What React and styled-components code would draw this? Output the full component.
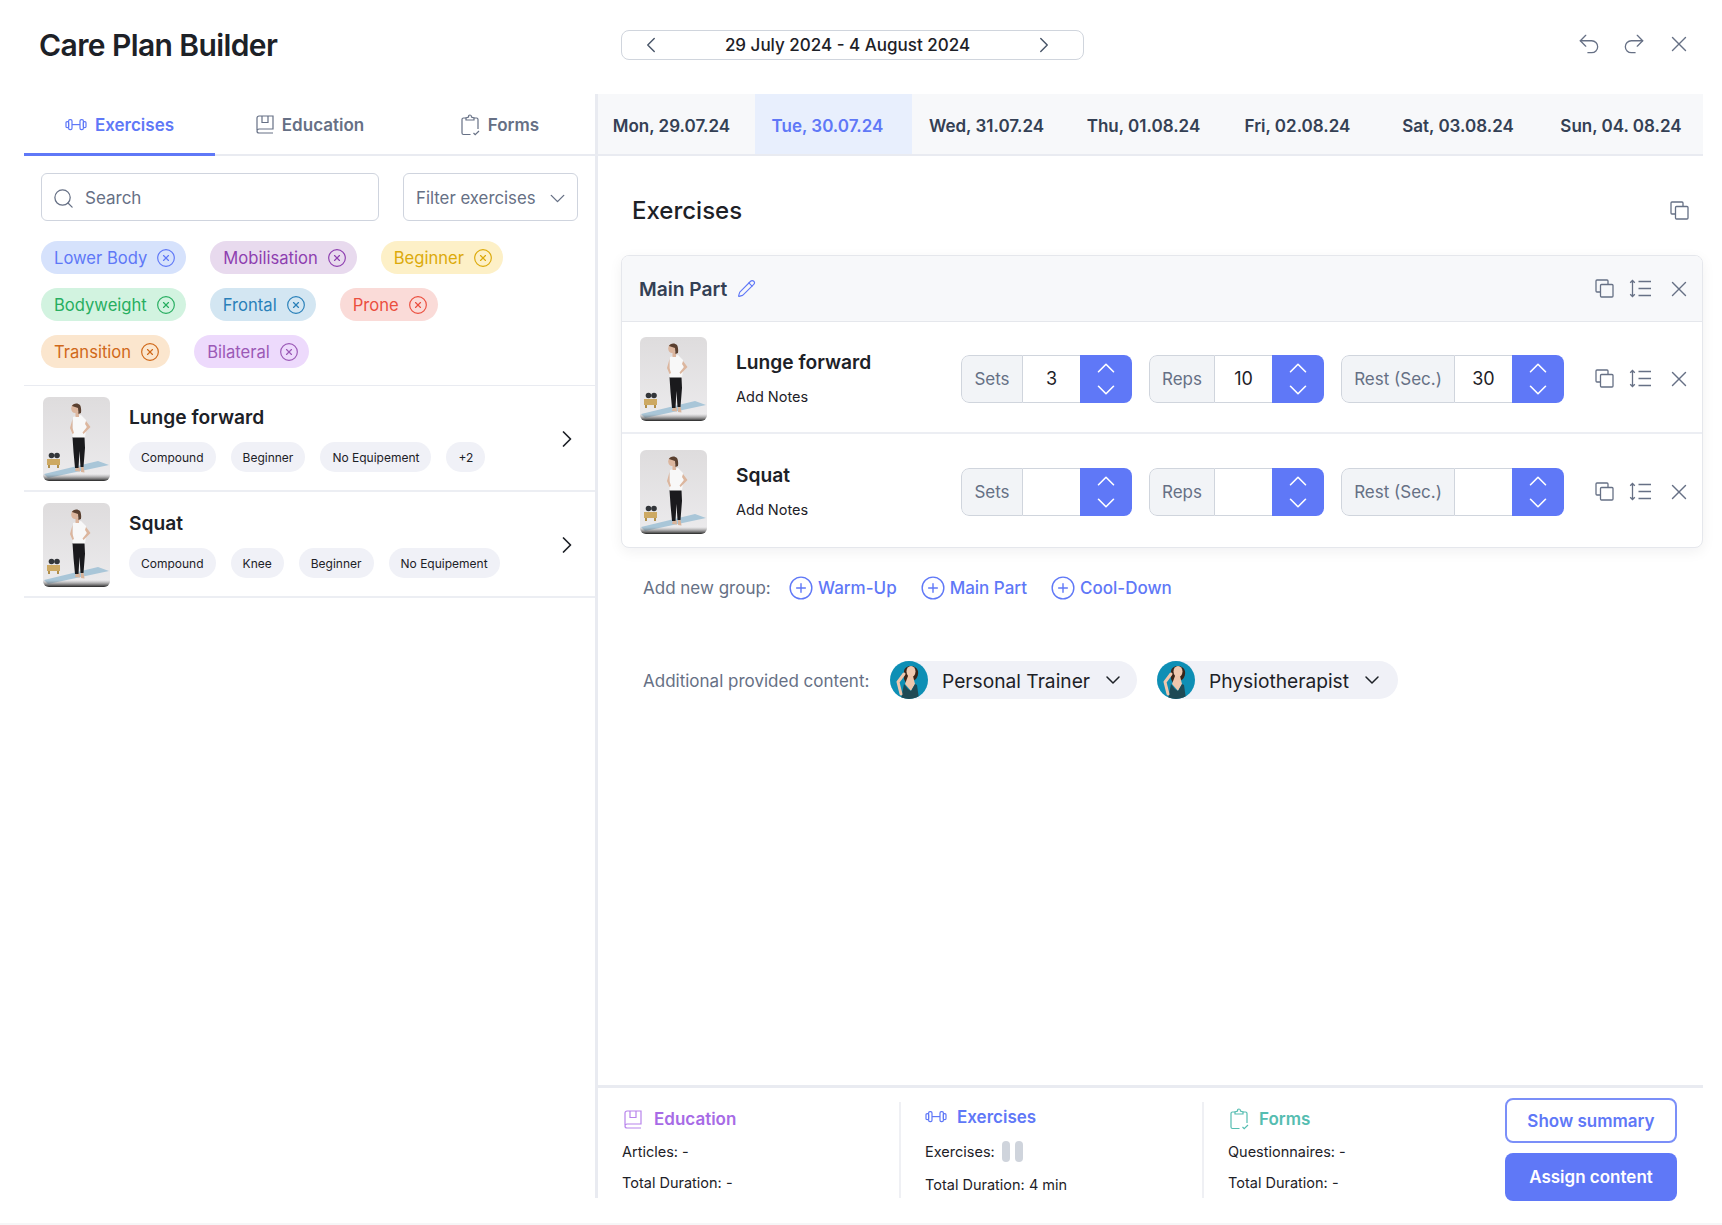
import React from 'react';
import styled, { createGlobalStyle } from 'styled-components';
import {
  ChevronLeft, ChevronRight, ChevronDown, ChevronUp, Undo2, Redo2, X, Search,
  CircleX, CirclePlus, Pencil,
} from 'lucide-react';

const BLUE = '#5f78f7';

const Global = createGlobalStyle`
  html, body { margin: 0; padding: 0; background: #fff; }
  * { box-sizing: border-box; }
  body { font-family: Inter, "Liberation Sans", sans-serif; color: #1d2127; }
`;

const Page = styled.div`
  width: 1722px;
  height: 1225px;
  padding: 0 19px 25px 24px;
  display: flex;
  flex-direction: column;
  overflow: hidden;
  background: #fff;
  border-bottom: 2px solid #f6f6f7;
`;

const Header = styled.header`
  height: 94px;
  flex: none;
  display: flex;
  align-items: flex-start;
`;

const Title = styled.h1`
  margin: 28px 0 0 15px;
  width: 582px;
  font-size: 30px;
  line-height: 34px;
  font-weight: 600;
  letter-spacing: -0.6px;
`;

const DateBox = styled.div`
  margin-top: 30px;
  width: 463px;
  height: 30px;
  border: 1px solid #d0d5dd;
  border-radius: 8px;
  display: flex;
  align-items: center;
  justify-content: space-between;
  padding: 0 26px 0 16px;
  font-size: 17px;
  font-weight: 500;
  color: #1d2127;
`;

const HeaderActions = styled.div`
  margin: 31px 0 0 auto;
  display: flex;
  align-items: center;
  gap: 19px;
  padding-right: 11px;
  color: #667085;
`;

const Body = styled.div`
  flex: 1;
  min-height: 0;
  display: flex;
`;

const Left = styled.aside`
  width: 574px;
  flex: none;
  border-right: 3px solid #e9ebf1;
  display: flex;
  flex-direction: column;
`;

const Tabs = styled.nav`
  height: 62px;
  flex: none;
  display: grid;
  grid-template-columns: 191px 190px 190px;
  border-bottom: 2px solid #e9ebf1;
`;

const Tab = styled.div`
  display: flex;
  align-items: center;
  justify-content: center;
  gap: 8px;
  padding-top: 2px;
  font-size: 17px;
  font-weight: 600;
  color: ${p => (p.$active ? BLUE : '#667085')};
  margin-bottom: -2px;
  border-bottom: 3px solid ${p => (p.$active ? BLUE : 'transparent')};
`;

const FilterRow = styled.div`
  display: flex;
  gap: 24px;
  padding: 17px 0 0 17px;
`;

const SearchBox = styled.div`
  width: 338px;
  height: 48px;
  border: 1px solid #cfd4de;
  border-radius: 6px;
  display: flex;
  align-items: center;
  gap: 10px;
  padding: 2px 0 0 10px;
  font-size: 17px;
  color: #667085;
`;

const FilterBox = styled.div`
  width: 175px;
  height: 48px;
  border: 1px solid #cfd4de;
  border-radius: 6px;
  display: flex;
  align-items: center;
  justify-content: space-between;
  padding: 2px 7px 0 12px;
  font-size: 16.800px;
  color: #667085;
`;

const Chips = styled.div`
  display: flex;
  flex-direction: column;
  gap: 14px;
  padding: 20px 0 17px 17px;
  border-bottom: 1px solid #e9ebf1;
`;

const ChipRow = styled.div`
  display: flex;
  gap: 24px;
`;

const Chip = styled.span`
  height: 33px;
  border-radius: 17px;
  padding: 1px 10px 0 13px;
  display: inline-flex;
  align-items: center;
  gap: 9px;
  font-size: 16.600px;
  background: ${p => p.$bg};
  color: ${p => p.$fg};
`;

const ListItem = styled.div`
  height: 106px;
  padding: 11px 14px 0 19px;
  display: flex;
  align-items: flex-start;
  border-bottom: 2px solid #eceef3;
`;

const Thumb = styled.svg`
  width: 67px;
  height: 84px;
  flex: none;
  border-radius: 6px;
  display: block;
`;

const ItemInfo = styled.div`
  margin-left: 19px;
  flex: 1;
  display: flex;
  flex-direction: column;
`;

const ItemName = styled.div`
  font-size: 19.200px;
  line-height: 24px;
  font-weight: 600;
  margin-top: 8px;
`;

const TagRow = styled.div`
  display: flex;
  gap: 15px;
  margin-top: 13px;
`;

const Tag = styled.span`
  height: 30px;
  padding: 0 12px;
  border-radius: 15px;
  background: #f0f1f7;
  display: inline-flex;
  align-items: center;
  font-size: 12px;
  color: #1d2127;
`;

const ItemArrow = styled.div`
  align-self: center;
  margin-top: -9px;
  color: #1d2127;
  display: flex;
`;

const Right = styled.main`
  flex: 1;
  min-width: 0;
  display: flex;
  flex-direction: column;
`;

const Days = styled.div`
  height: 62px;
  flex: none;
  display: flex;
  background: #f7f8fa;
  border-bottom: 2px solid #e9ebf1;
`;

const Day = styled.div`
  width: ${p => p.$w}px;
  padding: 4px ${p => p.$pr || 0}px 0 0;
  display: flex;
  align-items: center;
  justify-content: center;
  font-size: 17px;
  font-weight: 600;
  white-space: nowrap;
  color: ${p => (p.$active ? BLUE : '#344054')};
  background: ${p => (p.$active ? '#e8effd' : 'transparent')};
`;

const Content = styled.div`
  flex: 1;
  min-height: 0;
  padding: 0 0 0 23px;
`;

const SectionHead = styled.div`
  display: flex;
  justify-content: space-between;
  align-items: center;
  height: 99px;
  padding: 10px 14px 0 11px;
`;

const SectionTitle = styled.h2`
  margin: 0;
  font-size: 24px;
  font-weight: 500;
  color: #1d2127;
`;

const SectionAction = styled.span`
  display: flex;
  color: #667085;
`;

const GroupCard = styled.section`
  border: 1px solid #e5e7ec;
  border-radius: 8px;
  overflow: hidden;
  box-shadow: 0 4px 14px rgba(16, 24, 40, 0.06);
  background: #fff;
`;

const GroupHead = styled.div`
  height: 66px;
  background: #f7f8fa;
  border-bottom: 1px solid #e5e7ec;
  display: flex;
  align-items: center;
  padding: 0 10px 0 17px;
`;

const GroupTitle = styled.div`
  font-size: 19.200px;
  font-weight: 600;
  color: #344054;
  margin-right: 10px;
`;

const RowActions = styled.div`
  margin-left: auto;
  display: flex;
  align-items: center;
  gap: 15px;
  color: #667085;
`;

const ExerciseRow = styled.div`
  height: ${p => p.$h}px;
  display: flex;
  align-items: center;
  padding: ${p => p.$pt}px 10px 0 18px;
  border-bottom: ${p => (p.$last ? 'none' : '2px solid #eceef3')};
`;

const RowInfo = styled.div`
  width: 225px;
  margin-left: 29px;
  flex: none;
  margin-top: -1px;
`;

const RowName = styled.div`
  font-size: 19.200px;
  font-weight: 600;
  line-height: 24px;
  margin-bottom: 14px;
`;

const Notes = styled.div`
  font-size: 14.500px;
  line-height: 18px;
  color: #1d2127;
`;

const Steppers = styled.div`
  display: flex;
  gap: 17px;
  flex: none;
`;

const Stepper = styled.div`
  height: 48px;
  display: flex;
  border-radius: 8px;
  overflow: hidden;
`;

const StepLabel = styled.div`
  width: ${p => p.$w}px;
  background: #f2f4f7;
  border: 1px solid #d0d5dd;
  border-radius: 8px 0 0 8px;
  display: flex;
  align-items: center;
  justify-content: center;
  font-size: 17px;
  color: #667085;
`;

const StepValue = styled.div`
  width: 57px;
  border-top: 1px solid #d0d5dd;
  border-bottom: 1px solid #d0d5dd;
  display: flex;
  align-items: center;
  justify-content: center;
  font-size: 18px;
  color: #1d2127;
`;

const StepButtons = styled.div`
  width: 52px;
  background: ${BLUE};
  color: #fff;
  display: flex;
  flex-direction: column;
  align-items: center;
  justify-content: center;
  & > svg + svg { margin-top: -8px; }
  & > svg { flex: none; margin-bottom: 0; }
`;

const AddRow = styled.div`
  display: flex;
  align-items: center;
  height: 26px;
  margin-top: 27px;
  padding-left: 22px;
  font-size: 17px;
  color: #667085;
`;

const AddLabel = styled.span`
  width: 145px;
`;

const AddLink = styled.span`
  display: inline-flex;
  align-items: center;
  gap: 4px;
  margin-right: 23px;
  color: ${BLUE};
  font-weight: 500;
`;

const ProvidedRow = styled.div`
  display: flex;
  align-items: center;
  margin-top: 60px;
  padding-left: 22px;
  font-size: 17px;
  color: #667085;
`;

const ProvidedLabel = styled.span`
  width: 247px;
  padding-top: 2px;
`;

const Pill = styled.div`
  height: 38px;
  width: ${p => p.$w}px;
  margin-right: 20px;
  border-radius: 19px;
  background: #f0f1f7;
  display: flex;
  align-items: center;
  font-size: 19.200px;
  color: #1d2127;
`;

const PillName = styled.span`
  margin: 2px 11px 0 14px;
`;

const Avatar = styled.svg`
  width: 38px;
  height: 38px;
  border-radius: 50%;
  flex: none;
`;

const Footer = styled.footer`
  height: 113px;
  flex: none;
  border-top: 3px solid #e9ebf1;
  display: flex;
  align-items: flex-start;
`;

const Stat = styled.div`
  width: ${p => p.$w}px;
  height: 96px;
  margin-top: 14px;
  padding: 6px 0 0 ${p => p.$pl}px;
  border-right: ${p => (p.$last ? 'none' : '2px solid #eff0f4')};
  display: flex;
  flex-direction: column;
`;

const StatHead = styled.div`
  display: flex;
  align-items: center;
  gap: ${p => p.$gap}px;
  height: 22px;
  margin-top: ${p => p.$mt || 0}px;
  margin-left: ${p => p.$ml || 0}px;
  font-size: 17px;
  font-weight: 600;
  color: ${p => p.$color};
`;

const StatLine = styled.div`
  font-size: 14.500px;
  line-height: 20px;
  margin-top: ${p => p.$mt}px;
  color: #1d2127;
  display: flex;
  align-items: center;
`;

const Skeleton = styled.span`
  width: 8px;
  height: 21px;
  border-radius: 4px;
  background: #cfd4dc;
  margin-left: ${p => p.$ml}px;
`;

const FooterActions = styled.div`
  width: 172px;
  margin: 10px 26px 0 auto;
  display: flex;
  flex-direction: column;
  gap: 10px;
`;

const GhostButton = styled.button`
  height: 45px;
  border-radius: 8px;
  border: 2px solid #7b8ff8;
  background: #fff;
  color: ${BLUE};
  font: 600 17px Inter, sans-serif;
`;

const PrimaryButton = styled.button`
  height: 48px;
  border-radius: 8px;
  border: none;
  background: ${BLUE};
  color: #fff;
  font: 600 17px Inter, sans-serif;
`;

const Dumbbell = ({ size = 22, color = 'currentColor' }) => (
  <svg width={size} height={size * 0.6} viewBox="0 0 22 13" fill="none" stroke={color} strokeWidth="1.2">
    <rect x="1" y="3.5" width="2.6" height="6" rx="1.1" />
    <rect x="3.6" y="1.5" width="3.4" height="10" rx="1.4" />
    <path d="M7 6.5h8" />
    <rect x="15" y="1.5" width="3.4" height="10" rx="1.4" />
    <rect x="18.4" y="3.5" width="2.6" height="6" rx="1.1" />
  </svg>
);

const Book = ({ color = 'currentColor' }) => (
  <svg width="18" height="19" viewBox="0 0 18 19" fill="none" stroke={color} strokeWidth="1.2">
    <path d="M1 15V3a2 2 0 0 1 2-2h14v13H3a2 2 0 0 0-2 2 2 2 0 0 0 2 2h14" />
    <path d="M6 1v6.5h6V1" />
  </svg>
);

const Clipboard = ({ color = 'currentColor' }) => (
  <svg width="19" height="22" viewBox="0 0 19 22" fill="none" stroke={color} strokeWidth="1.2">
    <path d="M5 4H2.500A1.500 1.500 0 0 0 1 5.500V19a1.500 1.500 0 0 0 1.500 1.500h7" />
    <path d="M13 4h2.500A1.500 1.500 0 0 1 17 5.500V15" />
    <path d="M5 6V4l2.500-1C7.500 1.500 8 1 9 1s1.500.5 1.500 2L13 4v2z" />
    <path d="M12.500 19l1.700 1.700L18 17" />
  </svg>
);

const CopyIcon = () => (
  <svg width="19" height="19" viewBox="0 0 19 19" fill="none" stroke="currentColor" strokeWidth="1.300">
    <path d="M5.500 13H2a1 1 0 0 1-1-1V2a1 1 0 0 1 1-1h10a1 1 0 0 1 1 1v3.500" />
    <rect x="5.500" y="5.500" width="12.500" height="12.500" rx="1" />
  </svg>
);

const SortIcon = () => (
  <svg width="22" height="19" viewBox="0 0 22 19" fill="none" stroke="currentColor" strokeWidth="1.300">
    <path d="M3.500 1.500v16M1.200 3.800 3.500 1.500l2.300 2.300M1.200 15.200 3.500 17.500l2.300-2.300" />
    <path d="M9.500 2.500H22M9.500 9.500H22M9.500 16.500H22" />
  </svg>
);

const Photo = () => (
  <Thumb viewBox="0 0 67 84" aria-hidden="true">
    <defs>
      <linearGradient id="photoBg" x1="0" y1="0" x2="0" y2="1">
        <stop offset="0" stopColor="#dedcdd" />
        <stop offset="1" stopColor="#ecebed" />
      </linearGradient>
      <linearGradient id="photoBase" x1="0" y1="0" x2="0" y2="1">
        <stop offset="0" stopColor="#888" stopOpacity="0" />
        <stop offset="1" stopColor="#222" />
      </linearGradient>
    </defs>
    <rect width="67" height="84" fill="url(#photoBg)" />
    <path d="M1 77 55 64 66 68 5 81z" fill="#a9c6d8" />
    <rect x="0" y="77" width="67" height="7" fill="url(#photoBase)" />
    <rect x="4" y="62" width="13" height="6" fill="#cda963" />
    <rect x="5" y="68" width="2" height="3" fill="#b08f4c" />
    <rect x="14" y="68" width="2" height="3" fill="#b08f4c" />
    <circle cx="8.500" cy="58.500" r="2.800" fill="#33363a" />
    <circle cx="14" cy="58.500" r="2.800" fill="#33363a" />
    <path d="M33 70l-1 4 5 .5-.5-4.500zM38 69.500l0 5.500 3.500.6-1-6.100z" fill="#d8b49b" />
    <path d="M29.500 40h12l.5 11-1.500 19h-3L36.500 54l-1 17H32L30.500 55z" fill="#1a1a1d" />
    <path d="M30 20l8-2 5 5 .5 7-1.500 10.500H29.500L30 31z" fill="#f8f8f8" />
    <path d="M29.500 22l-2.500 9 2.500 6 1.500-1-1.500-5zM43 24l4.500 6-7 7-1-1.500 4.500-5.500-2-3z" fill="#dcb69e" />
    <rect x="32.500" y="15" width="3.500" height="5" fill="#dcb69e" />
    <ellipse cx="32" cy="11.500" rx="3.800" ry="4.600" fill="#dcb69e" />
    <path d="M29 9c1-3 6-3.500 8-1 1 1.500 1.500 5 1 8l-2.500 1-.5-6z" fill="#5a4030" />
  </Thumb>
);

const AvatarPhoto = () => (
  <Avatar viewBox="0 0 38 38" aria-hidden="true">
    <rect width="38" height="38" fill="#0e8fb5" />
    <path d="M14 10c1-6 12-7 14 0 .5 3-.5 6-2 8l-9 6-3-6z" fill="#3a2418" />
    <ellipse cx="21" cy="10.500" rx="4.500" ry="5.500" fill="#f0c9b0" />
    <path d="M18 15h5l2 8-4 7-6-7z" fill="#efc6ac" />
    <path d="M14 23l4 5 3 2 4-7 2 1 2 14H11z" fill="#1f4a55" />
    <path d="M11 33 8 21l6-8" fill="none" stroke="#efc6ac" strokeWidth="3" strokeLinecap="round" strokeLinejoin="round" />
  </Avatar>
);

const Stepped = ({ label, w, value }) => (
  <Stepper>
    <StepLabel $w={w}>{label}</StepLabel>
    <StepValue>{value}</StepValue>
    <StepButtons>
      <ChevronUp size={30} strokeWidth={1.300} />
      <ChevronDown size={30} strokeWidth={1.300} />
    </StepButtons>
  </Stepper>
);

const Actions = () => (
  <RowActions>
    <CopyIcon />
    <SortIcon />
    <X size={26} strokeWidth={1.300} />
  </RowActions>
);

const Exercise = ({ name, sets, reps, rest, h, pt, last }) => (
  <ExerciseRow $h={h} $pt={pt} $last={last}>
    <Photo />
    <RowInfo>
      <RowName>{name}</RowName>
      <Notes>Add Notes</Notes>
    </RowInfo>
    <Steppers>
      <Stepped label="Sets" w={62} value={sets} />
      <Stepped label="Reps" w={66} value={reps} />
      <Stepped label="Rest (Sec.)" w={114} value={rest} />
    </Steppers>
    <Actions />
  </ExerciseRow>
);

const chipRows = [
  [['Lower Body', '#d6e2fc', BLUE], ['Mobilisation', '#e8daee', '#8e3fb0'], ['Beginner', '#fdf0c7', '#dcaa0b']],
  [['Bodyweight', '#d2f3e0', '#27ae60'], ['Frontal', '#d3e6f2', '#2980b9'], ['Prone', '#fadbd8', '#eb4f3f']],
  [['Transition', '#fbe6ce', '#d0691a'], ['Bilateral', '#eddafc', '#9b59b6']],
];

const days = [
  ['Mon, 29.07.24', 157, 10], ['Tue, 30.07.24', 157, 12, true], ['Wed, 31.07.24', 149], ['Thu, 01.08.24', 165],
  ['Fri, 02.08.24', 143], ['Sat, 03.08.24', 178], ['Sun, 04. 08.24', 148],
];

export default function App() {
  return (
    <Page>
      <Global />
      <Header>
        <Title>Care Plan Builder</Title>
        <DateBox>
          <ChevronLeft size={26} strokeWidth={1.300} color="#475467" />
          <span>29 July 2024 - 4 August 2024</span>
          <ChevronRight size={26} strokeWidth={1.300} color="#475467" />
        </DateBox>
        <HeaderActions>
          <Undo2 size={26} strokeWidth={1.200} />
          <Redo2 size={26} strokeWidth={1.200} />
          <X size={26} strokeWidth={1.300} />
        </HeaderActions>
      </Header>
      <Body>
        <Left>
          <Tabs>
            <Tab $active><Dumbbell />Exercises</Tab>
            <Tab><Book color="#667085" />Education</Tab>
            <Tab><Clipboard color="#667085" />Forms</Tab>
          </Tabs>
          <FilterRow>
            <SearchBox><Search size={23} strokeWidth={1.300} />Search</SearchBox>
            <FilterBox>Filter exercises<ChevronDown size={25} strokeWidth={1.300} /></FilterBox>
          </FilterRow>
          <Chips>
            {chipRows.map((row, i) => (
              <ChipRow key={i}>
                {row.map(([t, bg, fg]) => (
                  <Chip key={t} $bg={bg} $fg={fg}>{t}<CircleX size={20} strokeWidth={1.400} /></Chip>
                ))}
              </ChipRow>
            ))}
          </Chips>
          <ListItem>
            <Photo />
            <ItemInfo>
              <ItemName>Lunge forward</ItemName>
              <TagRow>
                <Tag>Compound</Tag><Tag>Beginner</Tag><Tag>No Equipement</Tag><Tag>+2</Tag>
              </TagRow>
            </ItemInfo>
            <ItemArrow><ChevronRight size={28} strokeWidth={1.500} /></ItemArrow>
          </ListItem>
          <ListItem>
            <Photo />
            <ItemInfo>
              <ItemName>Squat</ItemName>
              <TagRow>
                <Tag>Compound</Tag><Tag>Knee</Tag><Tag>Beginner</Tag><Tag>No Equipement</Tag>
              </TagRow>
            </ItemInfo>
            <ItemArrow><ChevronRight size={28} strokeWidth={1.500} /></ItemArrow>
          </ListItem>
        </Left>
        <Right>
          <Days>
            {days.map(([t, w, pr, a]) => <Day key={t} $w={w} $pr={pr} $active={a}>{t}</Day>)}
          </Days>
          <Content>
            <SectionHead>
              <SectionTitle>Exercises</SectionTitle>
              <SectionAction><CopyIcon /></SectionAction>
            </SectionHead>
            <GroupCard>
              <GroupHead>
                <GroupTitle>Main Part</GroupTitle>
                <Pencil size={19} strokeWidth={1.400} color={BLUE} />
                <Actions />
              </GroupHead>
              <Exercise name="Lunge forward" sets="3" reps="10" rest="30" h={112} pt={3} />
              <Exercise name="Squat" h={113} pt={2} last />
            </GroupCard>
            <AddRow>
              <AddLabel>Add new group:</AddLabel>
              <AddLink><CirclePlus size={26} strokeWidth={1.300} />Warm-Up</AddLink>
              <AddLink><CirclePlus size={26} strokeWidth={1.300} />Main Part</AddLink>
              <AddLink><CirclePlus size={26} strokeWidth={1.300} />Cool-Down</AddLink>
            </AddRow>
            <ProvidedRow>
              <ProvidedLabel>Additional provided content:</ProvidedLabel>
              <Pill $w={247}>
                <AvatarPhoto /><PillName>Personal Trainer</PillName><ChevronDown size={24} strokeWidth={1.500} />
              </Pill>
              <Pill $w={241}>
                <AvatarPhoto /><PillName>Physiotherapist</PillName><ChevronDown size={24} strokeWidth={1.500} />
              </Pill>
            </ProvidedRow>
          </Content>
          <Footer>
            <Stat $w={303} $pl={24}>
              <StatHead $color="#a76be6" $gap={12} $ml={2}><Book color="#b884ec" />Education</StatHead>
              <StatLine $mt={12}>Articles: -</StatLine>
              <StatLine $mt={11}>Total Duration: -</StatLine>
            </Stat>
            <Stat $w={303} $pl={24}>
              <StatHead $color={BLUE} $gap={10} $mt={-2}><Dumbbell />Exercises</StatHead>
              <StatLine $mt={13}>Exercises:<Skeleton $ml={7} /><Skeleton $ml={5} /></StatLine>
              <StatLine $mt={13}>Total Duration: 4 min</StatLine>
            </Stat>
            <Stat $w={220} $pl={24} $last>
              <StatHead $color="#55bdb1" $gap={10} $ml={2}><Clipboard color="#55bdb1" />Forms</StatHead>
              <StatLine $mt={12}>Questionnaires: -</StatLine>
              <StatLine $mt={11}>Total Duration: -</StatLine>
            </Stat>
            <FooterActions>
              <GhostButton>Show summary</GhostButton>
              <PrimaryButton>Assign content</PrimaryButton>
            </FooterActions>
          </Footer>
        </Right>
      </Body>
    </Page>
  );
}
